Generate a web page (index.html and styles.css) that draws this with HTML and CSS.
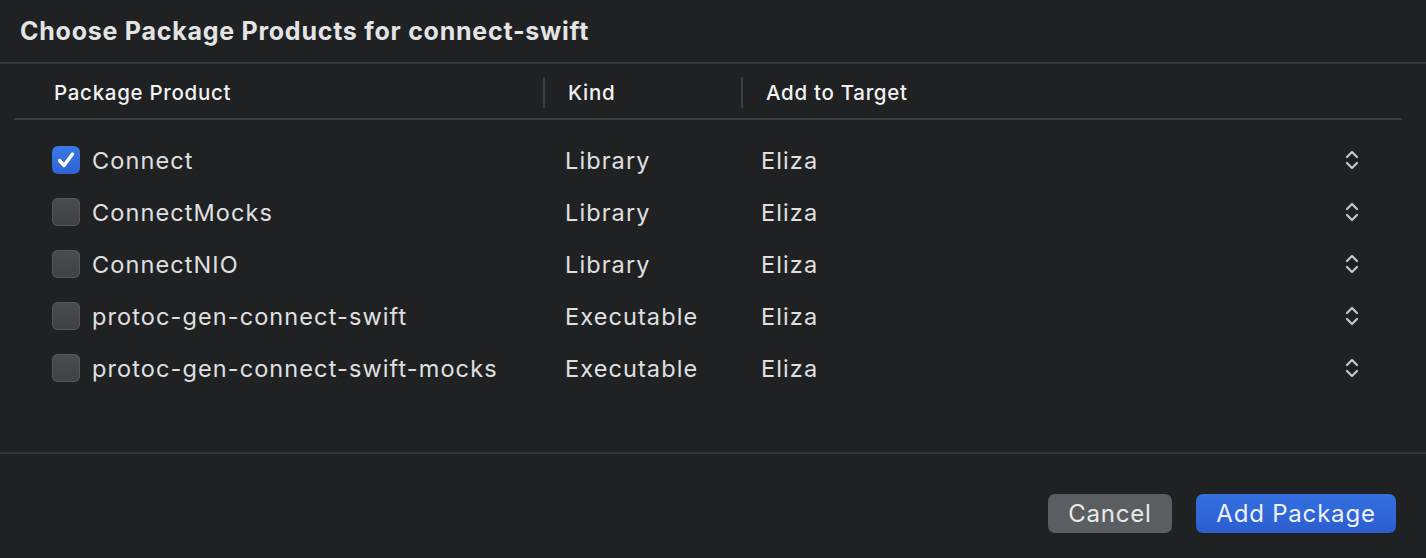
FILE: index.html
```html
<!DOCTYPE html>
<html>
<head>
<meta charset="utf-8">
<link rel="stylesheet" href="styles.css">
</head>
<body>
<div class="sheet">
  <div class="title">Choose Package Products for connect-swift</div>
  <div class="table">
    <div class="thead">
      <div class="th th-first">Package Product</div>
      <div class="th th-sep">Kind</div>
      <div class="th th-sep">Add to Target</div>
    </div>
    <div class="tbody">
      <div class="row">
        <div class="cell c1"><span class="check on"><svg viewBox="0 0 28 28" width="28" height="28"><path d="M7.5 14.5 L12 19.5 L20.5 8" fill="none" stroke="#fff" stroke-width="3.4" stroke-linecap="round" stroke-linejoin="round"/></svg></span><span>Connect</span></div>
        <div class="cell c2">Library</div>
        <div class="cell c3"><span>Eliza</span><svg class="chev" viewBox="0 0 16 24" width="16" height="24"><path d="M3 9 L8 4 L13 9 M3 15 L8 20 L13 15" fill="none" stroke="#c8c9ca" stroke-width="2.2" stroke-linecap="round" stroke-linejoin="round"/></svg></div>
      </div>
      <div class="row">
        <div class="cell c1"><span class="check"></span><span>ConnectMocks</span></div>
        <div class="cell c2">Library</div>
        <div class="cell c3"><span>Eliza</span><svg class="chev" viewBox="0 0 16 24" width="16" height="24"><path d="M3 9 L8 4 L13 9 M3 15 L8 20 L13 15" fill="none" stroke="#c8c9ca" stroke-width="2.2" stroke-linecap="round" stroke-linejoin="round"/></svg></div>
      </div>
      <div class="row">
        <div class="cell c1"><span class="check"></span><span>ConnectNIO</span></div>
        <div class="cell c2">Library</div>
        <div class="cell c3"><span>Eliza</span><svg class="chev" viewBox="0 0 16 24" width="16" height="24"><path d="M3 9 L8 4 L13 9 M3 15 L8 20 L13 15" fill="none" stroke="#c8c9ca" stroke-width="2.2" stroke-linecap="round" stroke-linejoin="round"/></svg></div>
      </div>
      <div class="row">
        <div class="cell c1"><span class="check"></span><span>protoc-gen-connect-swift</span></div>
        <div class="cell c2">Executable</div>
        <div class="cell c3"><span>Eliza</span><svg class="chev" viewBox="0 0 16 24" width="16" height="24"><path d="M3 9 L8 4 L13 9 M3 15 L8 20 L13 15" fill="none" stroke="#c8c9ca" stroke-width="2.2" stroke-linecap="round" stroke-linejoin="round"/></svg></div>
      </div>
      <div class="row">
        <div class="cell c1"><span class="check"></span><span>protoc-gen-connect-swift-mocks</span></div>
        <div class="cell c2">Executable</div>
        <div class="cell c3"><span>Eliza</span><svg class="chev" viewBox="0 0 16 24" width="16" height="24"><path d="M3 9 L8 4 L13 9 M3 15 L8 20 L13 15" fill="none" stroke="#c8c9ca" stroke-width="2.2" stroke-linecap="round" stroke-linejoin="round"/></svg></div>
      </div>
    </div>
  </div>
  <div class="footer">
    <button class="btn cancel">Cancel</button>
    <button class="btn primary">Add Package</button>
  </div>
</div>
</body>
</html>
```
FILE: styles.css
```css
html, body {
  margin: 0;
  padding: 0;
  background: #1f2123;
}
body {
  font-family: "Inter", "Noto Sans", sans-serif;
  color: #e1e1e2;
  width: 1426px;
  height: 558px;
  overflow: hidden;
}
.sheet {
  display: flex;
  flex-direction: column;
  height: 558px;
}
.title {
  height: 64px;
  box-sizing: border-box;
  padding: 16px 0 0 20px;
  font-size: 25px;
  font-weight: 700;
  color: #e4e4e5;
  border-bottom: 2px solid #343739;
  letter-spacing: 0.75px;
}
.table {
  height: 390px;
  border-bottom: 2px solid #343739;
  box-sizing: border-box;
}
.thead {
  margin: 0 24px 0 14px;
  height: 56px;
  box-sizing: border-box;
  border-bottom: 2px solid #3a3d3f;
  display: grid;
  grid-template-columns: 529px 198px 1fr;
  align-items: center;
}
.th {
  font-size: 20.5px;
  font-weight: 500;
  color: #f2f2f2;
  height: 31px;
  line-height: 31px;
  box-sizing: border-box;
  margin-top: 2px;
  letter-spacing: 0.7px;
}
.th-first {
  padding-left: 40px;
}
.th-sep {
  border-left: 2px solid #3d4042;
  padding-left: 23px;
}
.tbody {
  padding-top: 14px;
}
.row {
  display: grid;
  grid-template-columns: 513px 196px 1fr;
  height: 52px;
  align-items: center;
  margin-left: 52px;
  margin-right: 66px;
  font-size: 23.5px;
  letter-spacing: 1.1px;
  color: #e0e0e1;
}
.cell {
  display: flex;
  align-items: center;
}
.c1 {
  gap: 12px;
}
.c3 {
  justify-content: space-between;
}
.check {
  width: 28px;
  height: 28px;
  border-radius: 6px;
  box-sizing: border-box;
  background: linear-gradient(#4a4d4f, #3e4143);
  box-shadow: inset 0 0 0 1px #545759;
  display: block;
  flex: none;
}
.check.on {
  background: linear-gradient(#3a79e4, #2e63d3);
  box-shadow: none;
}
.check svg {
  display: block;
}
.chev {
  display: block;
}
.footer {
  flex: 1;
  display: flex;
  justify-content: flex-end;
  align-items: flex-start;
  padding: 40px 30px 0 0;
  gap: 24px;
}
.btn {
  font-family: "Inter", "Noto Sans", sans-serif;
  font-size: 24px;
  letter-spacing: 0.8px;
  height: 39px;
  border: none;
  border-radius: 7px;
  color: #e9e9ea;
  padding: 0;
  line-height: 39px;
}
.cancel {
  width: 124px;
  background: #5b5e60;
}
.primary {
  width: 200px;
  background: linear-gradient(#3470e0, #2b5ecf);
  color: #eef1f8;
}
```
